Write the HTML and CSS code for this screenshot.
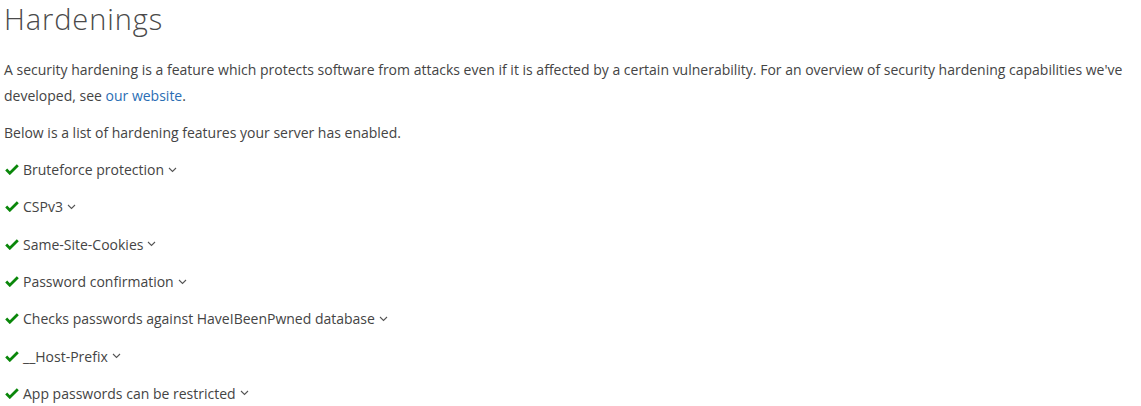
FILE: index.html
```html
<!DOCTYPE html>
<html>
<head>
<meta charset="utf-8">
<link rel="stylesheet" href="styles.css">
</head>
<body>
<div class="section">
  <h2 class="title">Hardenings</h2>
  <p class="desc first">A security hardening is a feature which protects software from attacks even if it is affected by a certain vulnerability. For an overview of security hardening capabilities we've developed, see <a class="link" href="#">our website</a>.</p>
  <p class="desc">Below is a list of hardening features your server has enabled.</p>
  <ul class="list">
    <li class="item"><svg class="check" width="14" height="11" viewBox="0 0 14 11"><path d="M1.2 5.6l3.6 3.6L12.8 1.2" fill="none" stroke="#0a870a" stroke-width="2.8"/></svg><span class="name">Bruteforce protection</span><svg class="caret" width="9" height="6" viewBox="0 0 9 6"><path d="M1 1l3.5 3.5L8 1" fill="none" stroke="#555" stroke-width="1.1"/></svg></li>
    <li class="item"><svg class="check" width="14" height="11" viewBox="0 0 14 11"><path d="M1.2 5.6l3.6 3.6L12.8 1.2" fill="none" stroke="#0a870a" stroke-width="2.8"/></svg><span class="name">CSPv3</span><svg class="caret" width="9" height="6" viewBox="0 0 9 6"><path d="M1 1l3.5 3.5L8 1" fill="none" stroke="#555" stroke-width="1.1"/></svg></li>
    <li class="item"><svg class="check" width="14" height="11" viewBox="0 0 14 11"><path d="M1.2 5.6l3.6 3.6L12.8 1.2" fill="none" stroke="#0a870a" stroke-width="2.8"/></svg><span class="name">Same-Site-Cookies</span><svg class="caret" width="9" height="6" viewBox="0 0 9 6"><path d="M1 1l3.5 3.5L8 1" fill="none" stroke="#555" stroke-width="1.1"/></svg></li>
    <li class="item"><svg class="check" width="14" height="11" viewBox="0 0 14 11"><path d="M1.2 5.6l3.6 3.6L12.8 1.2" fill="none" stroke="#0a870a" stroke-width="2.8"/></svg><span class="name">Password confirmation</span><svg class="caret" width="9" height="6" viewBox="0 0 9 6"><path d="M1 1l3.5 3.5L8 1" fill="none" stroke="#555" stroke-width="1.1"/></svg></li>
    <li class="item"><svg class="check" width="14" height="11" viewBox="0 0 14 11"><path d="M1.2 5.6l3.6 3.6L12.8 1.2" fill="none" stroke="#0a870a" stroke-width="2.8"/></svg><span class="name">Checks passwords against HaveIBeenPwned database</span><svg class="caret" width="9" height="6" viewBox="0 0 9 6"><path d="M1 1l3.5 3.5L8 1" fill="none" stroke="#555" stroke-width="1.1"/></svg></li>
    <li class="item"><svg class="check" width="14" height="11" viewBox="0 0 14 11"><path d="M1.2 5.6l3.6 3.6L12.8 1.2" fill="none" stroke="#0a870a" stroke-width="2.8"/></svg><span class="name">__Host-Prefix</span><svg class="caret" width="9" height="6" viewBox="0 0 9 6"><path d="M1 1l3.5 3.5L8 1" fill="none" stroke="#555" stroke-width="1.1"/></svg></li>
    <li class="item"><svg class="check" width="14" height="11" viewBox="0 0 14 11"><path d="M1.2 5.6l3.6 3.6L12.8 1.2" fill="none" stroke="#0a870a" stroke-width="2.8"/></svg><span class="name">App passwords can be restricted</span><svg class="caret" width="9" height="6" viewBox="0 0 9 6"><path d="M1 1l3.5 3.5L8 1" fill="none" stroke="#555" stroke-width="1.1"/></svg></li>
  </ul>
</div>
</body>
</html>
```
FILE: styles.css
```css
html, body { margin: 0; padding: 0; background: #fff; }
body { font-family: "Open Sans", sans-serif; color: #444; font-size: 14px; }
.section { padding: 0 4px; }
.title { font-weight: 300; font-size: 29px; letter-spacing: 0.9px; margin: 0; line-height: 38px; color: #4a4a4a; }
.desc { margin: 11px 0 0; line-height: 26px; }
.desc.first { margin-top: 19px; }
.link { color: #2a6db4; text-decoration: none; }
.list { list-style: none; margin: 5px 0 0; padding: 0; }
.item { display: flex; align-items: center; height: 37.3px; }
.check { margin: 0 4px 0 1px; flex: none; }
.caret { margin-left: 4px; flex: none; }
```
